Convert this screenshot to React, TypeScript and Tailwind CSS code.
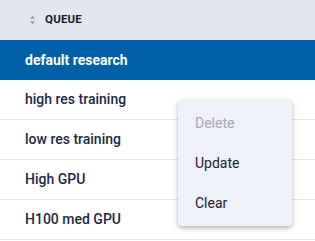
const rows = ['high res training', 'low res training', 'High GPU', 'H100 med GPU']

export default function App() {
  return (
    <div className="relative w-[315px] h-[241px] bg-white overflow-hidden font-['Roboto',sans-serif]">
      {/* Header */}
      <div className="h-10 bg-[#e4e7f1] flex items-center pl-[29px] gap-[9px]">
        <svg viewBox="0 0 8 12" className="w-[7px] h-[10px]" aria-hidden="true">
          <path d="M4 0.5 L7 4.5 H1 Z" fill="#9aa0ad" />
          <path d="M4 11.5 L7 7.5 H1 Z" fill="#9aa0ad" />
        </svg>
        <span className="text-[11.5px] font-bold uppercase text-[#0f1d33] tracking-[0.2px]">Queue</span>
      </div>

      {/* Selected row */}
      <div className="h-10 bg-[#0061a8] flex items-center pl-[25px]">
        <span className="text-[14px] font-bold text-white">default research</span>
      </div>

      {/* Rows */}
      {rows.map(r => (
        <div key={r} className="h-10 border-b border-[#e4e7f1] flex items-center pl-[25px]">
          <span className="text-[14px] font-medium text-[#1b2a44]">{r}</span>
        </div>
      ))}

      {/* Context menu */}
      <div className="absolute left-[178px] top-[100px] w-[114px] bg-[#eef0fa] rounded-[4px] shadow-[0_2px_4px_rgba(0,0,0,0.25),0_1px_8px_rgba(0,0,0,0.08)] py-[3px]">
        <div className="h-10 flex items-center pl-[17px] text-[14px] text-[#a6a9b3]">Delete</div>
        <div className="h-10 flex items-center pl-[17px] text-[14px] text-[#1f2230]">Update</div>
        <div className="h-10 flex items-center pl-[17px] text-[14px] text-[#1f2230]">Clear</div>
      </div>
    </div>
  )
}
